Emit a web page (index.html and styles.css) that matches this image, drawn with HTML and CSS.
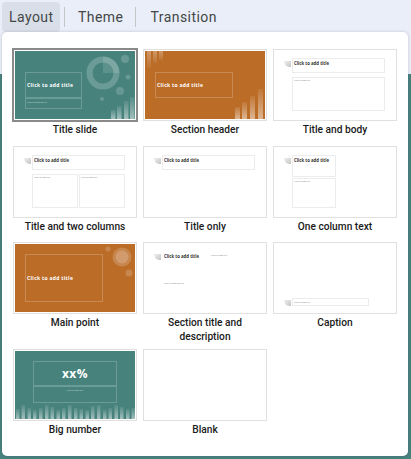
FILE: index.html
```html
<!DOCTYPE html>
<html lang="en">
<head>
    <meta charset="UTF-8">
    <meta name="viewport" content="width=device-width, initial-scale=1.0">
    <title>Layout</title>
    <link rel="stylesheet" href="styles.css">
</head>
<body>
    <div class="topbar">
        <div class="tabs">
            <button class="tab active">Layout</button>
            <span class="sep"></span>
            <button class="tab">Theme</button>
            <span class="sep"></span>
            <button class="tab">Transition</button>
        </div>
    </div>

    <svg class="defs" width="0" height="0">
        <defs>
            <linearGradient id="fadeUp" x1="0" y1="0" x2="0" y2="1">
                <stop offset="0" stop-color="#fff" stop-opacity="0.08"/>
                <stop offset="1" stop-color="#fff" stop-opacity="0.5"/>
            </linearGradient>
            <linearGradient id="fadeDown" x1="0" y1="0" x2="0" y2="1">
                <stop offset="0" stop-color="#fff" stop-opacity="0.3"/>
                <stop offset="1" stop-color="#fff" stop-opacity="0.05"/>
            </linearGradient>
            <linearGradient id="iconFade" x1="0" y1="0" x2="1" y2="1">
                <stop offset="0" stop-color="#f0f0f0"/>
                <stop offset="1" stop-color="#c4c4c4"/>
            </linearGradient>
            <symbol id="cornerIcon" viewBox="0 0 7 6">
                <path d="M0 0H7V6H5.5A5.5 6 0 0 1 0 0Z" fill="url(#iconFade)"/>
            </symbol>
        </defs>
    </svg>

    <div class="panel">
        <div class="grid">
            <!-- row 1 -->
            <div class="item selected">
                <div class="thumb">
                    <svg viewBox="0 0 120 68">
                        <rect class="teal" width="120" height="68"/>
                        <circle cx="88" cy="22" r="13.500" class="ring"/>
                        <path d="M88 5.500A16.500 16.500 0 0 1 104.500 22H98L88 22Z" fill="#fff" opacity="0.12"/>
                        <circle cx="110" cy="8" r="4" class="dot"/>
                        <circle cx="113" cy="26" r="2.500" class="dot"/>
                        <circle cx="105" cy="40" r="4" class="dot"/>
                        <circle cx="87" cy="48" r="2" class="dot"/>
                        <rect x="96" y="59" width="4.500" height="9" fill="url(#fadeUp)"/>
                        <rect x="102" y="55" width="4.500" height="13" fill="url(#fadeUp)"/>
                        <rect x="109" y="50" width="4.500" height="18" fill="url(#fadeUp)"/>
                        <rect x="115" y="46" width="4.500" height="22" fill="url(#fadeUp)"/>
                        <rect x="10.500" y="21.500" width="56" height="25" class="box-light"/>
                        <rect x="10.500" y="47.500" width="56" height="10" class="box-light"/>
                        <text x="12" y="36" class="title-big">Click to add title</text>
                        <text x="12" y="51.500" class="tiny-light">Click to add subtitle</text>
                    </svg>
                </div>
                <div class="label">Title slide</div>
            </div>
            <div class="item">
                <div class="thumb">
                    <svg viewBox="0 0 120 68">
                        <rect class="orange" width="120" height="68"/>
                        <rect x="2" width="4" height="17" fill="url(#fadeDown)"/>
                        <rect x="8" width="4" height="12" fill="url(#fadeDown)"/>
                        <rect x="14" width="4" height="9" fill="url(#fadeDown)"/>
                        <rect x="90" y="56" width="5" height="12" fill="url(#fadeUp)"/>
                        <rect x="97" y="51" width="5" height="17" fill="url(#fadeUp)"/>
                        <rect x="105" y="45" width="5" height="23" fill="url(#fadeUp)"/>
                        <rect x="113" y="38" width="5" height="30" fill="url(#fadeUp)"/>
                        <rect x="10.500" y="21.500" width="77" height="25" class="box-light"/>
                        <text x="12" y="36" class="title-big">Click to add title</text>
                    </svg>
                </div>
                <div class="label">Section header</div>
            </div>
            <div class="item">
                <div class="thumb">
                    <svg viewBox="0 0 120 68">
                        <use href="#cornerIcon" x="9" y="10" width="7" height="6"/>
                        <rect x="17.500" y="7.500" width="92" height="14" class="box"/>
                        <rect x="17.500" y="26.500" width="92" height="33" class="box"/>
                        <text x="19" y="14" class="title-small">Click to add title</text>
                        <text x="19" y="30" class="tiny">Click to add text</text>
                    </svg>
                </div>
                <div class="label">Title and body</div>
            </div>

            <!-- row 2 -->
            <div class="item">
                <div class="thumb">
                    <svg viewBox="0 0 120 68">
                        <use href="#cornerIcon" x="9" y="10" width="7" height="6"/>
                        <rect x="17.500" y="7.500" width="92" height="14" class="box"/>
                        <rect x="17.500" y="26.500" width="45" height="33" class="box"/>
                        <rect x="64.500" y="26.500" width="45" height="33" class="box"/>
                        <text x="19" y="14" class="title-small">Click to add title</text>
                        <text x="19" y="30" class="tiny">Click to add text</text>
                        <text x="66" y="30" class="tiny">Click to add text</text>
                    </svg>
                </div>
                <div class="label">Title and two columns</div>
            </div>
            <div class="item">
                <div class="thumb">
                    <svg viewBox="0 0 120 68">
                        <use href="#cornerIcon" x="9" y="10" width="7" height="6"/>
                        <rect x="17.500" y="7.500" width="92" height="14" class="box"/>
                        <text x="19" y="14" class="title-small">Click to add title</text>
                    </svg>
                </div>
                <div class="label">Title only</div>
            </div>
            <div class="item">
                <div class="thumb">
                    <svg viewBox="0 0 120 68">
                        <use href="#cornerIcon" x="9" y="10" width="7" height="6"/>
                        <rect x="17.500" y="7.500" width="43" height="21" class="box"/>
                        <rect x="17.500" y="30.500" width="43" height="29" class="box"/>
                        <text x="19" y="14" class="title-small">Click to add title</text>
                        <text x="19" y="34" class="tiny">Click to add text</text>
                    </svg>
                </div>
                <div class="label">One column text</div>
            </div>

            <!-- row 3 -->
            <div class="item">
                <div class="thumb">
                    <svg viewBox="0 0 120 68">
                        <rect class="orange" width="120" height="68"/>
                        <circle cx="107" cy="13" r="9.500" class="dot"/>
                        <circle cx="107" cy="13" r="6.500" class="dot"/>
                        <circle cx="93" cy="5" r="2.500" class="dot"/>
                        <circle cx="114" cy="29" r="3.500" class="dot"/>
                        <rect x="10.500" y="10.500" width="77" height="47" class="box-light"/>
                        <text x="12" y="36" class="title-big">Click to add title</text>
                    </svg>
                </div>
                <div class="label">Main point</div>
            </div>
            <div class="item">
                <div class="thumb">
                    <svg viewBox="0 0 120 68">
                        <use href="#cornerIcon" x="9" y="10" width="7" height="6"/>
                        <text x="19" y="14" class="title-small">Click to add title</text>
                        <text x="66" y="12" class="tiny">Click to add text</text>
                        <text x="19" y="40" class="tiny">Click to add subtitle</text>
                    </svg>
                </div>
                <div class="label">Section title and description</div>
            </div>
            <div class="item">
                <div class="thumb">
                    <svg viewBox="0 0 120 68">
                        <use href="#cornerIcon" x="9" y="56" width="7" height="6"/>
                        <rect x="17.500" y="54.500" width="76" height="7" class="box"/>
                        <text x="19" y="59" class="tiny">Click to add text</text>
                    </svg>
                </div>
                <div class="label">Caption</div>
            </div>

            <!-- row 4 -->
            <div class="item">
                <div class="thumb">
                    <svg viewBox="0 0 120 68">
                        <rect class="teal" width="120" height="68"/>
                        <g fill="url(#fadeUp)">
                            <rect x="1" y="58" width="3.500" height="10"/>
                            <rect x="6.500" y="54" width="3.500" height="14"/>
                            <rect x="12.500" y="57" width="3.500" height="11"/>
                            <rect x="18" y="59" width="3.500" height="9"/>
                            <rect x="24" y="57" width="3.500" height="11"/>
                            <rect x="30" y="54" width="3.500" height="14"/>
                            <rect x="35.500" y="56" width="3.500" height="12"/>
                            <rect x="41.500" y="59" width="3.500" height="9"/>
                            <rect x="47" y="57" width="3.500" height="11"/>
                            <rect x="53" y="54" width="3.500" height="14"/>
                            <rect x="59" y="57" width="3.500" height="11"/>
                            <rect x="64.500" y="58" width="3.500" height="10"/>
                            <rect x="70.500" y="59" width="3.500" height="9"/>
                            <rect x="76" y="55" width="3.500" height="13"/>
                            <rect x="82" y="54" width="3.500" height="14"/>
                            <rect x="88" y="59" width="3.500" height="9"/>
                            <rect x="93.500" y="57" width="3.500" height="11"/>
                            <rect x="99.500" y="54" width="3.500" height="14"/>
                            <rect x="105" y="56" width="3.500" height="12"/>
                            <rect x="111" y="58" width="3.500" height="10"/>
                            <rect x="116.500" y="57" width="3.500" height="11"/>
                        </g>
                        <rect x="18.500" y="10.500" width="83" height="24" class="box-light"/>
                        <rect x="18.500" y="35.500" width="83" height="16" class="box-light"/>
                        <text x="60" y="27" class="big-number">xx%</text>
                        <text x="60" y="39.500" class="tiny-light tiny-center">Click to add text</text>
                    </svg>
                </div>
                <div class="label">Big number</div>
            </div>
            <div class="item">
                <div class="thumb">
                    <svg viewBox="0 0 120 68"></svg>
                </div>
                <div class="label">Blank</div>
            </div>
        </div>
    </div>
</body>
</html>
```

FILE: styles.css
```css
html, body {
    margin: 0;
    height: 100%;
}

body {
    background-color: #47827d;
    font-family: Roboto, "Liberation Sans", sans-serif;
    overflow: hidden;
}

.topbar {
    height: 74px;
    background-color: #e9eef8;
}

.tabs {
    display: flex;
    align-items: center;
    height: 30px;
    padding: 2px 0 0 2px;
}

.tab {
    height: 30px;
    padding: 0 7px;
    border: none;
    border-radius: 4px;
    background: none;
    color: #444746;
    font-family: inherit;
    font-size: 14px;
    letter-spacing: 0.45px;
}

.tab.active {
    width: 58px;
    background-color: #d9dfe8;
}

.sep {
    width: 1px;
    height: 20px;
    margin: 0 6px 0 4px;
    background-color: #c4c7c5;
}

.sep + .tab + .sep {
    margin: 0 7px 0 5px;
}

.defs {
    position: absolute;
}

/* menu that drops over the slide */
.panel {
    position: absolute;
    top: 32px;
    left: 2px;
    width: 406px;
    height: 424px;
    box-sizing: border-box;
    padding: 17px 11px 0;
    background-color: #fff;
    border-radius: 5px;
    box-shadow: 0 0 3px rgba(60, 64, 67, 0.25);
}

.grid {
    display: grid;
    grid-template-columns: repeat(3, 124px);
    column-gap: 6px;
}

.item {
    display: flex;
    flex-direction: column;
    align-items: center;
}

.thumb {
    width: 124px;
    height: 72px;
    box-sizing: border-box;
    padding: 1px;
    border: 1px solid #e0e0e0;
}

.thumb svg {
    display: block;
    width: 120px;
    height: 68px;
}

.selected .thumb {
    border-color: #8a8a8a;
    outline: 1px solid #8a8a8a;
}

.label {
    box-sizing: border-box;
    width: 124px;
    min-height: 23.5px;
    margin-top: 1px;
    padding: 1px 0 5px;
    font-size: 10.2px;
    font-weight: 500;
    line-height: 14px;
    text-align: center;
    color: #1a1a1a;
}

.teal {
    fill: #47827d;
}

.orange {
    fill: #bb6c27;
}

.ring {
    fill: none;
    stroke: #fff;
    stroke-width: 6;
    stroke-opacity: 0.2;
}

.dot {
    fill: #fff;
    fill-opacity: 0.18;
}

.box {
    fill: none;
    stroke: #ececec;
    stroke-width: 1;
}

.box-light {
    fill: none;
    stroke: #fff;
    stroke-opacity: 0.2;
    stroke-width: 1;
}

.title-big {
    font-family: "Open Sans", sans-serif;
    font-size: 5px;
    font-weight: 700;
    letter-spacing: 0.3px;
    fill: #fff;
}

.title-small {
    font-family: "Open Sans", sans-serif;
    font-size: 4.3px;
    font-weight: 700;
    fill: #333;
}

.tiny {
    font-family: "Open Sans", sans-serif;
    font-size: 2.2px;
    fill: #777;
}

.tiny-light {
    font-family: "Open Sans", sans-serif;
    font-size: 2.2px;
    fill: #fff;
    fill-opacity: 0.75;
}

.tiny-center {
    text-anchor: middle;
}

.big-number {
    font-family: "Open Sans", sans-serif;
    font-size: 12px;
    font-weight: 700;
    letter-spacing: 0.5px;
    text-anchor: middle;
    fill: #fff;
}
```
